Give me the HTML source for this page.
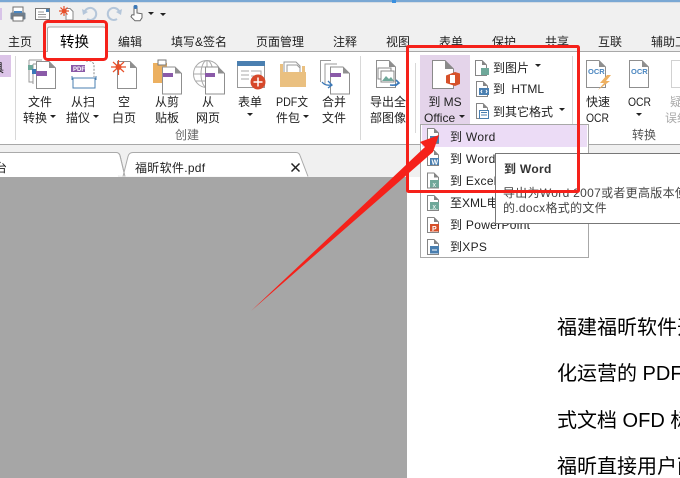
<!DOCTYPE html>
<html><head><meta charset="utf-8">
<style>
html,body{margin:0;padding:0;background:#fff}
svg{display:block}
text{font-family:"Liberation Sans","Noto Sans CJK SC",sans-serif;font-size:12px;fill:#222}
.c{text-anchor:middle}
.l{letter-spacing:.3px}
</style></head>
<body>
<svg width="680" height="478" viewBox="0 0 680 478" xmlns="http://www.w3.org/2000/svg">
<defs>
<g id="doc"><path d="M.5.5H13L19.5 7V27.500H.5Z" fill="#fff" stroke="#8f8f8f"/><path d="M13 .5V7H19.500Z" fill="#8f8f8f"/></g>
<g id="sm"><path d="M.5.5H7L11.500 5V15.500H.5Z" fill="#fff" stroke="#858585"/><path d="M7 .5V5H11.500Z" fill="#858585"/></g>
</defs>

<!-- backgrounds -->
<rect width="680" height="52" fill="#f0f0f0"/>
<rect width="680" height="2" fill="#7aa8d4"/>
<rect y="2" width="680" height="1" fill="#d8dde3"/>
<rect x="392" y="0" width="4" height="3" fill="#3a90e0"/>
<rect y="51" width="680" height="1" fill="#a8a8a8"/>
<rect y="52" width="680" height="92" fill="#fff"/>
<rect y="144" width="680" height="1" fill="#a8a8a8"/>
<rect y="145" width="680" height="32" fill="#f0f0f0"/>
<rect y="177" width="407" height="301" fill="#a6a6a6"/>
<rect x="407" y="177" width="273" height="301" fill="#fff"/>

<!-- quick access toolbar -->
<g>
<rect x="0" y="8" width="2" height="12" fill="#d8c4e8"/>
<rect x="13" y="7" width="10" height="6" fill="#fff" stroke="#707070"/>
<rect x="10.500" y="12.500" width="15" height="7" rx="1" fill="#6f7f8f"/>
<rect x="13" y="16" width="10" height="5" fill="#fff" stroke="#707070"/>
<rect x="14" y="11" width="8" height="2" fill="#4a86c0"/>
<rect x="35.500" y="8.500" width="14" height="11" fill="#fff" stroke="#777"/>
<path d="M38 12h6M38 14.500h8M38 17h8" stroke="#999"/>
<rect x="46" y="9" width="3" height="3" fill="#4a7fb0"/>
<path d="M66 8.500h4l3 3V20H66Z" fill="#fff" stroke="#888"/>
<path d="M59 11h10M64 6v10M60.500 7.500l7 7M67.500 7.500l-7 7" stroke="#e8502a" stroke-width="1.200"/>
<circle cx="64" cy="11" r="2.200" fill="#e8502a"/>
<path d="M85 11a6 6 0 1 1 2 8" fill="none" stroke="#b4c6da" stroke-width="2"/>
<path d="M82 9l1 6 5-3z" fill="#b4c6da"/>
<path d="M119 11a6 6 0 1 0-2 8" fill="none" stroke="#b4c6da" stroke-width="2"/>
<path d="M122 9l-1 6-5-3z" fill="#b4c6da"/>
<path d="M134 15v-8a1.500 1.500 0 0 1 3 0v6l5 .8v4l-2 3h-5l-4-4 1-2z" fill="#fff" stroke="#666"/>
<circle cx="135.500" cy="7" r="2" fill="#3a78b8"/>
<path d="M148 12h6l-3 3z" fill="#222"/>
<path d="M160 11h6M160 13h6l-3 3z" fill="#222"/>
</g>

<!-- tabs -->
<path d="M47.500 52V29q0-2 2-2h54q2 0 2 2V52" fill="#fff" stroke="#a8a8a8"/>
<rect x="48" y="50" width="57" height="3" fill="#fff"/>
<text x="8" y="46">主页</text>
<text x="60" y="47" style="font-size:14.500px;fill:#000">转换</text>
<text x="118" y="46">编辑</text>
<text x="171" y="46" textLength="56" lengthAdjust="spacing">填写&amp;签名</text>
<text x="256" y="46">页面管理</text>
<text x="333" y="46">注释</text>
<text x="386" y="46">视图</text>
<text x="439" y="46">表单</text>
<text x="492" y="46">保护</text>
<text x="545" y="46">共享</text>
<text x="598" y="46">互联</text>
<text x="651" y="46">辅助工</text>

<!-- ribbon left stub -->
<rect x="0" y="55" width="11" height="22" fill="#dcc4e8"/>
<text x="-8" y="72">具</text>
<rect x="15" y="56" width="1" height="84" fill="#d8d8d8"/>

<!-- 文件转换 -->
<path d="M29 60h13M29 60v22h4M33 64h12M33 64v20" fill="none" stroke="#999"/>
<use href="#doc" x="36" y="61"/>
<rect x="28" y="65" width="5" height="5" fill="#6fa89a"/>
<rect x="32" y="69" width="4" height="5" fill="#3a78b8"/>
<rect x="36" y="71" width="11" height="5" fill="#8a5aa8"/>
<text class="c" x="40" y="106">文件</text>
<text x="23" y="122">转换</text><path d="M50 115h6l-3 3z" fill="#222"/>

<!-- 从扫描仪 -->
<rect x="71" y="65" width="14" height="7" fill="#8a5aa8"/>
<text x="73" y="71" style="font-size:6px;fill:#fff;font-weight:bold">PDF</text>
<path d="M86 61h5l3 3v13" fill="none" stroke="#888" stroke-dasharray="2 1.500"/>
<path d="M72 78h24M72 76v4M96 76v4M73 78v10h22V78" fill="none" stroke="#4a7fb0"/>
<text class="c" x="83" y="106">从扫</text>
<text x="66" y="122">描仪</text><path d="M93 115h6l-3 3z" fill="#222"/>

<!-- 空白页 -->
<use href="#doc" x="117" y="61"/>
<path d="M111 67h15M118.500 60v15M113 62l11 10M124 62l-11 10" stroke="#e8502a" stroke-width="1.200"/>
<circle cx="118.500" cy="67" r="3" fill="#e8502a"/>
<text class="c" x="124" y="106">空</text>
<text class="c" x="124" y="122">白页</text>

<!-- 从剪贴板 -->
<rect x="153" y="63" width="14" height="20" fill="#ecb060"/>
<rect x="158" y="60" width="8" height="5" fill="#fff" stroke="#777"/>
<use href="#doc" x="162" y="67" transform="translate(0,-0.500)"/>
<rect x="163" y="73" width="10" height="4" fill="#8a5aa8"/>
<text class="c" x="167" y="106">从剪</text>
<text class="c" x="167" y="122">贴板</text>

<!-- 从网页 -->
<circle cx="207" cy="74" r="13.500" fill="#fff" stroke="#aaa"/>
<ellipse cx="207" cy="74" rx="6" ry="13.500" fill="none" stroke="#aaa"/>
<path d="M194 74h27M196 67h22M196 81h22M207 60v28" stroke="#aaa"/>
<use href="#doc" x="205" y="67" transform="translate(0,-0.500)"/>
<rect x="205" y="73" width="10" height="4" fill="#8a5aa8"/>
<text class="c" x="208" y="106">从</text>
<text class="c" x="208" y="122">网页</text>

<!-- 表单 -->
<rect x="237.500" y="61.500" width="27" height="26" fill="#fff" stroke="#999"/>
<rect x="237" y="61" width="28" height="5" fill="#4a7fb0"/>
<path d="M241 71h8M241 75h8M241 79h8M251 71h10v5h-10" fill="none" stroke="#aaa"/>
<circle cx="258" cy="82" r="7.500" fill="#d6482a"/>
<path d="M258 77.500v9M253.500 82h9" stroke="#fff" stroke-width="1.500"/>
<text class="c" x="250" y="106">表单</text>
<path d="M247 113h6l-3 3z" fill="#222"/>

<!-- PDF文件包 -->
<path d="M284 72V62h12l4 4v6" fill="#fff" stroke="#999"/>
<path d="M287 72V65h10l3 3v4" fill="#fff" stroke="#999"/>
<rect x="280" y="64" width="3" height="8" fill="#eac080"/>
<rect x="302" y="66" width="3" height="6" fill="#eac080"/>
<rect x="280" y="72" width="26" height="15" fill="#eac080"/>
<text x="276" y="106" textLength="32" lengthAdjust="spacingAndGlyphs">PDF文</text>
<text x="276" y="122">件包</text><path d="M303 115h6l-3 3z" fill="#222"/>

<!-- 合并文件 -->
<path d="M320.500 82V60.500H331M325 85V64h12" fill="none" stroke="#999"/>
<use href="#doc" x="330" y="67" transform="translate(0,-0.500)"/>
<rect x="330" y="73" width="11" height="4" fill="#8a5aa8"/>
<path d="M322 82q3 4 9 3M328 81l4 4-4 3" fill="none" stroke="#3a78b8" stroke-width="1.300"/>
<text class="c" x="334" y="106">合并</text>
<text class="c" x="334" y="122">文件</text>

<text class="c" x="187" y="139" style="fill:#666">创建</text>
<rect x="360" y="56" width="1" height="84" fill="#d8d8d8"/>

<!-- 导出全部图像 -->
<use href="#doc" x="376" y="60"/>
<rect x="378" y="68" width="13" height="11" fill="#fff" stroke="#888"/>
<rect x="381" y="71" width="13" height="11" fill="#fff" stroke="#888"/>
<path d="M382 81l4-5 3 3 2-2 3 4z" fill="#6fa89a"/>
<path d="M390 85q7 1 9-3M396 80l3 3-4 3" fill="none" stroke="#3a78b8" stroke-width="1.600"/>
<text x="370" y="106">导出全</text>
<text x="370" y="122">部图像</text>
<rect x="415" y="63" width="1" height="70" fill="#d8d8d8"/>

<!-- 到MS Office -->
<rect x="420" y="55" width="50" height="69" fill="#e4d4ea"/>
<path d="M432.500 60.500H445L453.500 69V88.500H432.500Z" fill="#fff" stroke="#8a8a8a"/>
<path d="M445 60.500V69H453.500Z" fill="#8a8a8a"/>
<path d="M446 75.500L455 72 460 73.500V84L455 86 446 83z" fill="#d6502a"/>
<rect x="450" y="75" width="5" height="8" fill="#fff"/>
<text class="c" x="445" y="106">到 MS</text>
<text x="424" y="122">Office</text><path d="M459 115h6l-3 3z" fill="#222"/>

<!-- 到图片 etc -->
<use href="#sm" x="475" y="60"/>
<rect x="481" y="68" width="8" height="7" fill="#6fa89a"/>
<text x="493" y="72">到图片</text><path d="M535 64h6l-3 3z" fill="#222"/>
<use href="#sm" x="476" y="81"/>
<rect x="479" y="88" width="10" height="7" fill="#4a7fb0"/>
<path d="M482 90l-1 1.500 1 1.500M486 90l1 1.500-1 1.500" stroke="#fff" fill="none"/>
<text x="493" y="93" style="word-spacing:3px">到 HTML</text>
<use href="#sm" x="476" y="103"/>
<rect x="479.500" y="110.500" width="9" height="8" fill="#fff" stroke="#4a7fb0"/>
<path d="M481 112.500h6M481 115h6" stroke="#4a7fb0"/>
<text x="493" y="116">到其它格式</text><path d="M559 108h6l-3 3z" fill="#222"/>

<rect x="572" y="56" width="1" height="84" fill="#d8d8d8"/>

<!-- OCR -->
<use href="#doc" x="586" y="60"/>
<text x="588" y="74" style="font-size:7.500px;font-weight:bold;fill:#4a86c0">OCR</text>
<path d="M607 75l-7 8h4l-6 7 12-9h-4l5-6z" fill="#eeb060"/>
<text x="586" y="106" textLength="24" lengthAdjust="spacing">快速</text>
<text x="586" y="122" textLength="23" lengthAdjust="spacingAndGlyphs">OCR</text>
<use href="#doc" x="629" y="60"/>
<text x="631" y="74" style="font-size:7.500px;font-weight:bold;fill:#4a86c0">OCR</text>
<text x="628" y="106" textLength="23" lengthAdjust="spacingAndGlyphs">OCR</text>
<path d="M636 113h6l-3 3z" fill="#222"/>
<g opacity=".4"><use href="#doc" x="671" y="60"/></g>
<text x="670" y="106" style="fill:#aaa">疑</text>
<text x="665" y="122" style="fill:#aaa">误纠</text>
<text class="c" x="644" y="139" style="fill:#555">转换</text>

<!-- doc tabs -->
<path d="M0 152.500H116q3 0 4 3l5 21" fill="#fff" stroke="#aaa"/>
<path d="M123 176.500l5-20q1-4 5-4H296q3 0 4 3l8 21" fill="#fff" stroke="#aaa"/>
<rect x="0" y="153" width="118" height="24" fill="#fff"/>
<path d="M116 152.500q3 0 4 3l5 21" fill="none" stroke="#aaa"/>
<text x="-5" y="172">台</text>
<text x="135" y="172" class="l">福昕软件.pdf</text>
<path d="M291.500 163.500l8 8M299.500 163.500l-8 8" stroke="#222" stroke-width="1.500"/>

<!-- document -->
<text x="557" y="334" style="font-size:20px;fill:#000">福建福昕软件开发</text>
<text x="557" y="380" style="font-size:20px;fill:#000">化运营的 PDF 电子文</text>
<text x="557" y="427" style="font-size:20px;fill:#000">式文档 OFD 标准</text>
<text x="557" y="473" style="font-size:20px;fill:#000">福昕直接用户面向</text>

<!-- dropdown menu -->
<rect x="420.500" y="124.500" width="168" height="133" fill="#fff" stroke="#a8a8a8"/>
<rect x="422" y="125" width="165" height="22" fill="#ecdcf6"/>
<use href="#sm" x="427" y="128"/><rect x="430" y="136" width="9" height="7" fill="#4a7fb0"/>
<text x="450" y="141" class="l">到 Word</text>
<use href="#sm" x="427" y="150"/><rect x="430" y="158" width="9" height="7" fill="#4a7fb0"/>
<text x="431.500" y="164.500" style="font-size:7px;font-weight:bold;fill:#fff">W</text>
<text x="450" y="163" class="l">到 Word</text>
<use href="#sm" x="427" y="172.500"/><rect x="430" y="180" width="9" height="7.500" fill="#6fa89a"/>
<text x="432.500" y="187" style="font-size:7px;fill:#fff">x</text>
<text x="450" y="185" class="l">到 Excel</text>
<use href="#sm" x="427" y="195"/><rect x="430" y="202" width="9" height="7.500" fill="#6fa89a"/>
<text x="432.500" y="209" style="font-size:7px;fill:#fff">x</text>
<text x="450" y="207">至XML电子表格</text>
<use href="#sm" x="427" y="217"/><rect x="430" y="224" width="9" height="7.500" fill="#d6502a"/>
<text x="432" y="231" style="font-size:7px;font-weight:bold;fill:#fff">P</text>
<text x="450" y="229" class="l">到 PowerPoint</text>
<use href="#sm" x="427" y="239"/><rect x="430" y="246" width="9" height="7.500" fill="#4a7fb0"/>
<path d="M432 250h5" stroke="#fff"/>
<text x="450" y="251" class="l">到XPS</text>

<!-- tooltip -->
<rect x="495.500" y="153.500" width="190" height="70" fill="#fff" stroke="#777"/>
<text x="504" y="173" style="font-weight:bold;fill:#333" class="l">到 Word</text>
<text x="503" y="197" style="fill:#444" class="l">导出为Word 2007或者更高版本使用</text>
<text x="503" y="212" style="fill:#444" class="l">的.docx格式的文件</text>

<!-- red annotations -->
<rect x="44.500" y="21.500" width="62" height="38" rx="3" fill="none" stroke="#f5211a" stroke-width="3"/>
<rect x="407.500" y="46.500" width="171" height="145" rx="1" fill="none" stroke="#f5211a" stroke-width="3"/>
<path d="M251 311L425 147 420 142 439 135 433 152 429.500 155Z" fill="#f5211a"/>
</svg>
</body></html>
